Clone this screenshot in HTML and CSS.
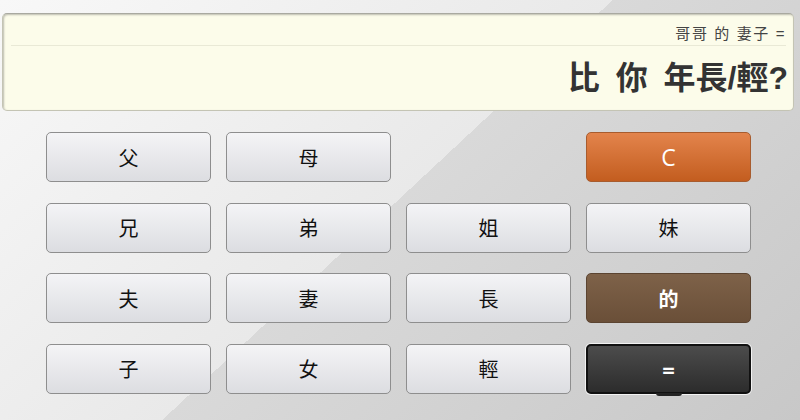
FILE: index.html
```html
<html><head><link rel="stylesheet" href="styles.css"></head><body>
<div class="display">
    <div class="expr">哥哥 的 妻子 =</div>
    <div class="result">比 你 年長/輕?</div>
</div>
<div class="keys">
    <button class="key">父</button>
    <button class="key">母</button>
    <span class="blank"></span>
    <button class="key clear">C</button>
    <button class="key">兄</button>
    <button class="key">弟</button>
    <button class="key">姐</button>
    <button class="key">妹</button>
    <button class="key">夫</button>
    <button class="key">妻</button>
    <button class="key">長</button>
    <button class="key of">的</button>
    <button class="key">子</button>
    <button class="key">女</button>
    <button class="key">輕</button>
    <button class="key equals">=</button>
</div>
</body></html>
```

FILE: styles.css
```css
/* Base */
body {
    margin: 0;
    width: 800px;
    height: 420px;
    overflow: hidden;
    font-family: "Noto Sans CJK TC", "Noto Sans", sans-serif;
    background: linear-gradient(137deg, #f8f8f8 0%, #e9e9e9 49%, #d9d9d9 49%, #c8c8c8 100%);
}

/* Display */
.display {
    margin: 13px 6px 0 2px;
    height: 96px;
    background-color: #fcfcea;
    border: 1px solid #c4c4b4;
    border-top-color: #a9a9a0;
    border-radius: 5px;
    box-shadow: inset 1px 1px 2px rgba(0, 0, 0, 0.25);
    padding: 0 7px 0 8px;
}

.expr {
    height: 32px;
    line-height: 40px;
    text-align: right;
    font-family: "Liberation Sans", "Noto Sans CJK TC", sans-serif;
    font-size: 15px;
    letter-spacing: 1.6px;
    color: #444;
    border-bottom: 1px solid #e9e9d6;
    box-sizing: border-box;
}

.result {
    text-align: right;
    font-family: "Liberation Sans", "Noto Sans CJK TC", sans-serif;
    font-size: 32px;
    font-weight: bold;
    word-spacing: 7px;
    color: #333;
    line-height: 64px;
    margin-right: -2px;
}

/* Keypad */
.keys {
    display: grid;
    grid-template-columns: repeat(4, 165px);
    grid-auto-rows: 50px;
    column-gap: 15px;
    row-gap: 20.5px;
    padding: 21px 0 0 46px;
}

.key {
    position: relative;
    font-family: "Noto Sans CJK TC", "Noto Sans", sans-serif;
    font-size: 20px;
    color: #111;
    background: linear-gradient(#f4f4f6, #dcdde1);
    border: 1px solid #8e8e8e;
    border-radius: 5px;
    padding: 0;
}

.clear {
    font-family: "Open Sans", "Noto Sans", sans-serif;
    font-size: 23px;
    color: #fff;
    background: linear-gradient(#e3844c, #c35d1f);
    border-color: #a85c2e;
}

.of {
    color: #fff;
    font-weight: bold;
    background: linear-gradient(#7e6249, #6a4f38);
    border-color: #5b4431;
}

.equals {
    color: #fff;
    font-family: "Open Sans", "Noto Sans", sans-serif;
    font-size: 22px;
    font-weight: bold;
    background: linear-gradient(#4c4c4c, #2c2c2c);
    border: 2px solid #111;
    box-shadow: 0 0 0 1px #f2f2f2;
}

.equals::after {
    content: "";
    position: absolute;
    left: 68px;
    bottom: -4px;
    width: 26px;
    height: 3px;
    background: #222;
    border-radius: 0 0 4px 4px;
}
```
